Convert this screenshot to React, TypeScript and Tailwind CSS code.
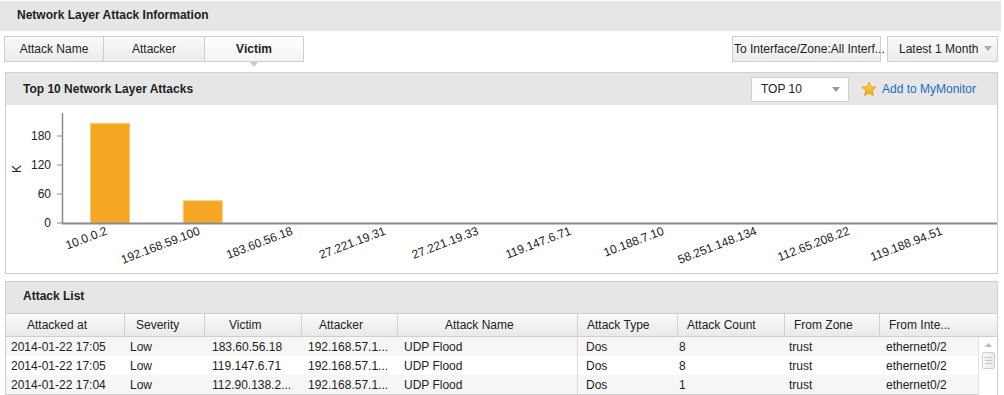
import React from "react";

const CATEGORIES = [
  "10.0.0.2",
  "192.168.59.100",
  "183.60.56.18",
  "27.221.19.31",
  "27.221.19.33",
  "119.147.6.71",
  "10.188.7.10",
  "58.251.148.134",
  "112.65.208.22",
  "119.188.94.51",
];

const VALUES = [206, 46, 0, 0, 0, 0, 0, 0, 0, 0];

const COLUMNS = [
  { title: "Attacked at", width: 119, headPad: 21, cellPad: 5 },
  { title: "Severity", width: 80, headPad: 11, cellPad: 5 },
  { title: "Victim", width: 97, headPad: 24, cellPad: 7 },
  { title: "Attacker", width: 96, headPad: 17, cellPad: 6 },
  { title: "Attack Name", width: 180, headPad: 47, cellPad: 6 },
  { title: "Attack Type", width: 100, headPad: 9, cellPad: 8 },
  { title: "Attack Count", width: 107, headPad: 9, cellPad: 2 },
  { title: "From Zone", width: 95, headPad: 9, cellPad: 5 },
  { title: "From Inte...", width: 117, headPad: 9, cellPad: 7 },
];

const ROWS = [
  ["2014-01-22 17:05", "Low", "183.60.56.18", "192.168.57.1...", "UDP Flood", "Dos", "8", "trust", "ethernet0/2"],
  ["2014-01-22 17:05", "Low", "119.147.6.71", "192.168.57.1...", "UDP Flood", "Dos", "8", "trust", "ethernet0/2"],
  ["2014-01-22 17:04", "Low", "112.90.138.2...", "192.168.57.1...", "UDP Flood", "Dos", "1", "trust", "ethernet0/2"],
];

function Caret({ color = "#999" }: { color?: string }) {
  return (
    <svg width="8" height="5" viewBox="0 0 8 5">
      <path d="M0 0 L8 0 L4 5 Z" fill={color} />
    </svg>
  );
}

function Star() {
  return (
    <svg width="16" height="16" viewBox="0 0 24 24">
      <defs>
        <linearGradient id="starg" x1="0" y1="0" x2="0" y2="1">
          <stop offset="0" stopColor="#ffe066" />
          <stop offset="1" stopColor="#f5a000" />
        </linearGradient>
      </defs>
      <path
        d="M12 1.5 L15 8.6 L22.6 9.2 L16.8 14.2 L18.6 21.8 L12 17.8 L5.4 21.8 L7.2 14.2 L1.4 9.2 L9 8.6 Z"
        fill="url(#starg)"
        stroke="#e08a00"
        strokeWidth="1"
        strokeLinejoin="round"
      />
    </svg>
  );
}

function Chart() {
  const yOf = (v: number) => 224 - (v * 29) / 60;
  return (
    <svg width="991" height="167" viewBox="6 106 991 167" className="block">
      <text
        x="18"
        y="170"
        fontSize="12"
        fill="#222"
        textAnchor="middle"
        transform="rotate(-90 18 170)"
        dominantBaseline="middle"
      >
        K
      </text>
      {[0, 60, 120, 180].map((t) => (
        <g key={t}>
          <line x1="57" x2="62" y1={yOf(t)} y2={yOf(t)} stroke="#888" strokeWidth="1" />
          <text x="51" y={yOf(t) + 4} fontSize="12" fill="#222" textAnchor="end">
            {t}
          </text>
        </g>
      ))}
      <line x1="62.5" x2="62.5" y1="114" y2="225" stroke="#8a8a8a" strokeWidth="1.5" />
      {VALUES.map((v, i) => {
        if (!v) return null;
        const cx = 110 + i * 92.8;
        const top = yOf(v);
        return (
          <rect
            key={i}
            x={cx - 19.5}
            y={top}
            width="39"
            height={224 - top}
            fill="#f5a623"
            stroke="#fbc96b"
            strokeWidth="1"
          />
        );
      })}
      <line x1="62" x2="997" y1="224.5" y2="224.5" stroke="#8a8a8a" strokeWidth="2" />
      {CATEGORIES.map((c, i) => {
        const x = 110 + i * 92.8 - 2;
        const y = 235;
        return (
          <text
            key={c}
            x={x}
            y={y}
            fontSize="12"
            fill="#222"
            textAnchor="end"
            transform={`rotate(-21 ${x} ${y})`}
          >
            {c}
          </text>
        );
      })}
    </svg>
  );
}

export default function App() {
  return (
    <div
      className="relative w-[1004px] h-[395px] overflow-hidden bg-white text-[12px] text-[#222]"
      style={{ fontFamily: '"Liberation Sans", Arial, sans-serif' }}
    >
      <div className="mt-px flex h-[30px] w-[1001px] items-center bg-[#e6e6e6] pb-[2px] pl-[17px] font-bold">
        Network Layer Attack Information
      </div>

      <div className="mt-[5px] flex h-[26px] items-stretch pl-[4px] pr-[6px]">
        <div className="flex">
          <div className="flex w-[100px] items-center justify-center border border-[#cfcfcf] bg-gradient-to-b from-[#fafafa] to-[#ececec] pb-[1px]">
            Attack Name
          </div>
          <div className="flex w-[101px] items-center justify-center border border-l-0 border-[#cfcfcf] bg-gradient-to-b from-[#fafafa] to-[#ececec] pb-[1px]">
            Attacker
          </div>
          <div className="relative flex w-[99px] items-center justify-center border border-l-0 border-[#cfcfcf] bg-gradient-to-b from-[#ffffff] to-[#f3f3f3] pb-[1px] font-bold">
            Victim
            <div className="absolute left-1/2 top-full mt-[1px] -translate-x-1/2">
              <Caret color="#c8c8c8" />
            </div>
          </div>
        </div>
        <div className="ml-auto flex gap-[6px]">
          <div className="flex w-[149px] items-center whitespace-nowrap border border-[#cfcfcf] bg-gradient-to-b from-[#fafafa] to-[#ececec] pb-[1px] pl-[1px]">
            To Interface/Zone:All Interf...
          </div>
          <div className="flex w-[111px] items-center gap-[6px] border border-[#cfcfcf] bg-gradient-to-b from-[#fafafa] to-[#ececec] pb-[1px] pl-[11px]">
            Latest 1 Month
            <Caret color="#aaa" />
          </div>
        </div>
      </div>

      <div className="ml-[5px] mt-[10px] h-[202px] w-[993px] border border-[#cfcfcf]">
        <div className="flex h-[32px] items-center bg-[#e6e6e6] pl-[17px] pr-[21px]">
          <span className="font-bold">Top 10 Network Layer Attacks</span>
          <div className="ml-auto flex h-[25px] w-[98px] items-center justify-between border border-[#cfcfcf] bg-white pl-[9px] pr-[8px]">
            <span>TOP 10</span>
            <Caret color="#999" />
          </div>
          <div className="ml-[12px] flex items-center gap-[5px] text-[#1b6ec2]">
            <Star />
            <span>Add to MyMonitor</span>
          </div>
        </div>
        <Chart />
      </div>

      <div className="ml-[5px] mt-[7px] w-[993px] border border-[#cfcfcf]">
        <div className="flex h-[31px] items-center bg-[#e6e6e6] pb-[3px] pl-[17px] font-bold">Attack List</div>
        <div className="flex h-[24px] border-t border-b border-[#cfcfcf] bg-gradient-to-b from-[#fbfbfb] to-[#e9e9e9]">
          {COLUMNS.map((col, i) => (
            <div
              key={col.title}
              className={`flex items-center whitespace-nowrap ${i < COLUMNS.length - 1 ? "border-r border-[#d2d2d2]" : ""}`}
              style={{ width: col.width, paddingLeft: col.headPad }}
            >
              {col.title}
            </div>
          ))}
        </div>
        <div className="relative">
          {ROWS.map((row, r) => (
            <div key={r} className={`flex h-[19px] ${r % 2 === 0 ? "bg-[#f6f6f6]" : "bg-white"}`}>
              {row.map((cell, i) => (
                <div
                  key={i}
                  className={`flex items-center whitespace-nowrap ${i === 5 ? "border-l border-[#d8d8d8]" : ""}`}
                  style={{
                    width: COLUMNS[i].width,
                    paddingLeft: COLUMNS[i].cellPad,
                    marginLeft: i === 5 ? -1 : 0,
                  }}
                >
                  {cell}
                </div>
              ))}
            </div>
          ))}
          <div className="absolute right-0 top-0 h-[60px] w-[19px] border-l border-[#e2e2e2] bg-white">
            <div className="flex justify-center pt-[6px]">
              <svg width="7" height="4" viewBox="0 0 7 4">
                <path d="M0 4 L7 4 L3.5 0 Z" fill="#b8b8b8" />
              </svg>
            </div>
            <div className="mx-auto mt-[5px] flex h-[17px] w-[13px] flex-col items-center justify-center gap-[2px] rounded-[2px] border border-[#cfcfcf] bg-gradient-to-r from-[#fafafa] to-[#eaeaea]">
              <div className="h-px w-[7px] bg-[#c4c4c4]" />
              <div className="h-px w-[7px] bg-[#c4c4c4]" />
              <div className="h-px w-[7px] bg-[#c4c4c4]" />
            </div>
          </div>
        </div>
      </div>
    </div>
  );
}
